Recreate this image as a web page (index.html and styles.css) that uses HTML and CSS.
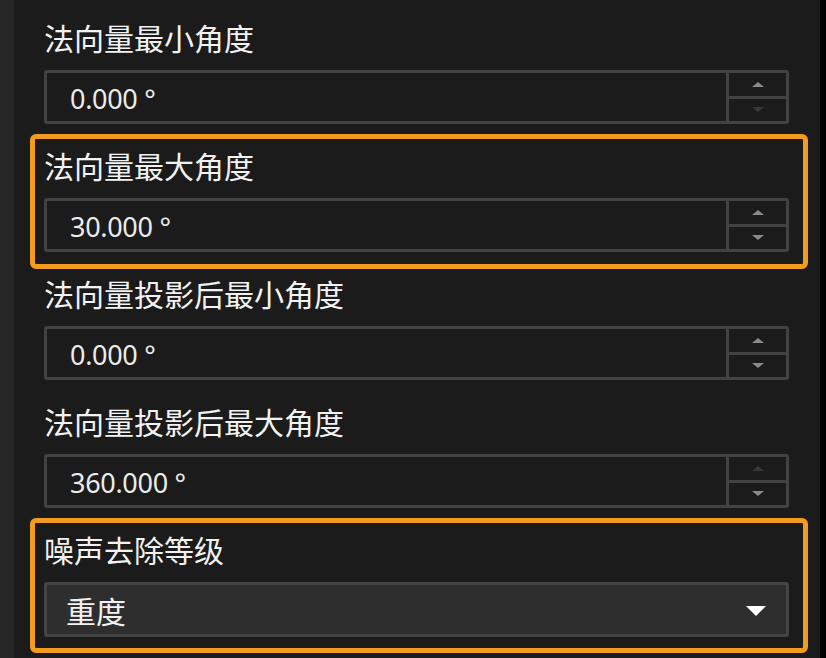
FILE: index.html
```html
<!DOCTYPE html>
<html lang="zh-CN">
<head>
    <meta charset="UTF-8">
    <meta name="viewport" content="width=device-width, initial-scale=1.0">
    <title>参数</title>
    <link rel="stylesheet" href="styles.css">
</head>
<body>
    <div class="strip"></div>

    <div class="panel">
        <div class="field">
            <div class="label">法向量最小角度</div>
            <div class="spinbox">
                <div class="value">0.000 °</div>
                <div class="spin">
                    <div class="up"><i></i></div>
                    <div class="down off"><i></i></div>
                </div>
            </div>
        </div>

        <div class="field marked">
            <div class="label">法向量最大角度</div>
            <div class="spinbox">
                <div class="value">30.000 °</div>
                <div class="spin">
                    <div class="up"><i></i></div>
                    <div class="down"><i></i></div>
                </div>
            </div>
        </div>

        <div class="field">
            <div class="label">法向量投影后最小角度</div>
            <div class="spinbox">
                <div class="value">0.000 °</div>
                <div class="spin">
                    <div class="up"><i></i></div>
                    <div class="down"><i></i></div>
                </div>
            </div>
        </div>

        <div class="field">
            <div class="label">法向量投影后最大角度</div>
            <div class="spinbox">
                <div class="value">360.000 °</div>
                <div class="spin">
                    <div class="up off"><i></i></div>
                    <div class="down"><i></i></div>
                </div>
            </div>
        </div>

        <div class="field marked">
            <div class="label">噪声去除等级</div>
            <div class="combo">
                <div class="combo-text">重度</div>
                <div class="combo-arrow"></div>
            </div>
        </div>
    </div>

    <div class="edge"></div>
</body>
</html>
```

FILE: styles.css
```css
body {
    margin: 0;
    height: 658px;
    display: flex;
    background-color: #000;
    overflow: hidden;
    font-family: "Noto Sans CJK SC", sans-serif;
    color: #f2f2f2;
}

.strip {
    width: 14px;
    background-color: #272727;
}

.panel {
    width: 806px;
    background-color: #1b1b1b;
    padding-top: 6px;
    box-sizing: border-box;
}

.edge {
    flex: 1;
}

.field {
    width: 778px;
    height: 135px;
    margin-left: 16px;
    margin-bottom: -7px;
    padding: 8px 14px 0 9px;
    box-sizing: border-box;
    border: 5px solid transparent;
    border-radius: 6px;
}

.field.marked {
    border-color: #f39b1f;
}

.label {
    font-size: 30px;
    line-height: 36px;
    height: 36px;
    margin-bottom: 15px;
    white-space: nowrap;
}

.spinbox {
    height: 54px;
    display: flex;
    border: 3px solid #424242;
    border-radius: 3px;
    box-sizing: border-box;
}

.value {
    flex: 1;
    display: flex;
    align-items: center;
    padding: 3px 0 0 23px;
    font-family: "Noto Sans", sans-serif;
    font-size: 27px;
    letter-spacing: -0.3px;
    color: #ececec;
}

.spin {
    width: 57px;
    border-left: 3px solid #424242;
    display: flex;
    flex-direction: column;
}

.spin div {
    flex: 1;
    display: flex;
    align-items: center;
    justify-content: center;
}

.spin .up {
    border-bottom: 3px solid #424242;
}

.spin .up i {
    border-left: 6px solid transparent;
    border-right: 6px solid transparent;
    border-bottom: 5px solid #8c8c8c;
}

.spin .down i {
    border-left: 6px solid transparent;
    border-right: 6px solid transparent;
    border-top: 5px solid #8c8c8c;
}

.spin .off i {
    border-top-color: #383838;
    border-bottom-color: #383838;
}

.combo {
    height: 55px;
    display: flex;
    align-items: center;
    justify-content: space-between;
    padding: 0 20px 0 19px;
    box-sizing: border-box;
    background-color: #2e2e2e;
    border: 3px solid #444;
    border-radius: 3px;
}

.combo-text {
    font-size: 30px;
}

.combo-arrow {
    margin-top: 2px;
    border-left: 10px solid transparent;
    border-right: 10px solid transparent;
    border-top: 10px solid #fff;
}
```
